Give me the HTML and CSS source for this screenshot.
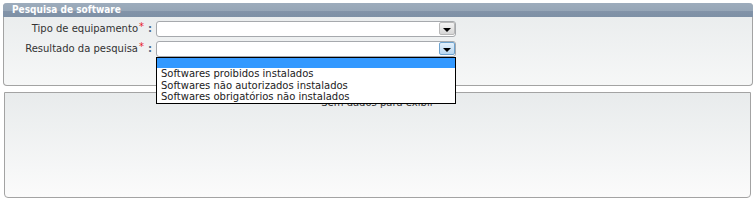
FILE: index.html
```html
<!DOCTYPE html>
<html lang="pt">
<head>
<meta charset="utf-8">
<title>Pesquisa de software</title>
<link rel="stylesheet" href="styles.css">
</head>
<body>
<div class="page">
  <section class="panel">
    <header class="panel-head">Pesquisa de software</header>
    <div class="panel-body">
      <div class="form">
        <label class="lbl">Tipo de equipamento<span class="req">*</span><span class="colon">:</span></label>
        <div class="sel"><span class="sel-btn"><span class="tri"></span></span></div>
        <label class="lbl">Resultado da pesquisa<span class="req">*</span><span class="colon">:</span></label>
        <div class="sel open"><span class="sel-btn active"><span class="tri"></span></span>
          <ul class="popup">
            <li class="opt hl"></li>
            <li class="opt">Softwares proibidos instalados</li>
            <li class="opt">Softwares não autorizados instalados</li>
            <li class="opt">Softwares obrigatórios não instalados</li>
          </ul>
        </div>
      </div>
    </div>
  </section>
  <section class="results">
    <p class="empty">Sem dados para exibir</p>
  </section>
</div>
</body>
</html>
```
FILE: styles.css
```css
html, body { margin: 0; padding: 0; background: #ffffff; }
body { font-family: "DejaVu Sans", Verdana, sans-serif; font-size: 10px; color: #333333; }
.page { padding: 3px 3px 0 3px; width: 750px; }

.panel {
  border: 1px solid #a3a3a3;
  border-top: 0;
  border-radius: 4px 4px 4px 4px;
  background: linear-gradient(#e8ebec, #f6f7f7);
  overflow: visible;
}
.panel-head {
  height: 14px;
  margin: 0 -1px;
  padding-left: 9px;
  border-radius: 4px 4px 0 0;
  background: linear-gradient(#9dacbc 0, #96a6b7 57%, #8293a8 58%, #7e90a5 100%);
  color: #ffffff;
  font-family: "DejaVu Sans Condensed", "DejaVu Sans", sans-serif;
  font-stretch: condensed;
  font-weight: bold;
  font-size: 10px;
  line-height: 14px;
}
.panel-body { padding: 4px 0 28px 0; }

.form {
  display: grid;
  grid-template-columns: 148px 300px;
  column-gap: 4px;
  row-gap: 4px;
}
.lbl {
  text-align: right;
  height: 16px;
  line-height: 16px;
  white-space: nowrap;
  color: #333333;
}
.req { color: #e8202a; position: relative; top: -2px; margin-left: 1px; }
.colon { color: #4d6a8c; margin-left: 4px; font-weight: bold; }

.sel {
  position: relative;
  box-sizing: border-box;
  height: 16px;
  border: 1px solid #a6a9ad;
  border-radius: 3px;
  background: #ffffff;
}
.sel-btn {
  position: absolute;
  right: 0;
  top: 0;
  width: 16px;
  height: 13px;
  box-sizing: border-box;
  border: 1px solid #b9b9b9;
  border-radius: 2px;
  background: linear-gradient(#f4f4f4, #d6d6d6);
  display: flex;
  align-items: center;
  justify-content: center;
}
.sel-btn.active {
  border-color: #6ea3cf;
  background: linear-gradient(#e3f0fb, #b8d7f1);
}
.tri {
  width: 0; height: 0;
  border-left: 4px solid transparent;
  border-right: 4px solid transparent;
  border-top: 4px solid #000000;
  margin-top: 2px;
}

.popup {
  position: absolute;
  left: -1px;
  top: 15px;
  width: 300px;
  box-sizing: border-box;
  margin: 0;
  padding: 0;
  list-style: none;
  border: 1px solid #000000;
  background: #ffffff;
  z-index: 5;
}
.opt {
  height: 11.7px;
  line-height: 11.7px;
  padding-left: 4px;
  color: #222222;
  white-space: nowrap;
}
.opt.hl { height: 10px; background: #3399ff; }

.results {
  margin: 6px 2px 0 1px;
  height: 104px;
  border: 1px solid #a3a3a3;
  border-radius: 0 0 4px 4px;
  background: linear-gradient(#e8ebec, #fbfbfb);
}
.empty {
  margin: 0;
  padding-top: 4px;
  text-align: center;
  line-height: 12px;
  color: #333333;
}
```
